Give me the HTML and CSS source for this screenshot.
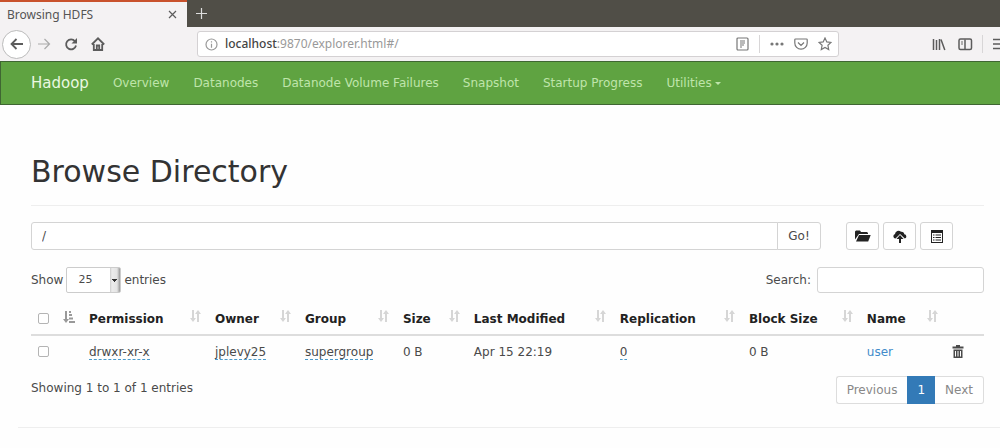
FILE: index.html
```
<!DOCTYPE html>
<html lang="en">
<head>
<meta charset="utf-8">
<title>Browsing HDFS</title>
<link rel="stylesheet" href="styles.css">
</head>
<body>
<svg class="defs" aria-hidden="true">
  <symbol id="sort" viewBox="0 0 12 12"><path d="M3 0h2v8h2L4 12 1 8h2zM8 12h2V4h2L9 0 6 4h2z"/></symbol>
</svg>
<header class="browser">
  <div class="tabs">
    <div class="tab"><span>Browsing HDFS</span>
      <button class="plain" aria-label="Close tab"><svg width="9" height="9" viewBox="0 0 9 9" class="line"><path d="M1 1l7 7M8 1L1 8"/></svg></button>
    </div>
    <button class="plain new-tab" aria-label="New tab"><svg width="13" height="13" viewBox="0 0 13 13" class="line"><path d="M6.5 1v11M1 6.5h11"/></svg></button>
  </div>
  <div class="toolbar">
    <div class="nav-buttons">
      <button class="plain back" aria-label="Back"><svg width="14" height="12" viewBox="0 0 14 12" class="line thick"><path d="M13 6H1.500M6.500 1l-5 5 5 5"/></svg></button>
      <button class="plain forward" aria-label="Forward"><svg width="14" height="12" viewBox="0 0 14 12" class="line"><path d="M1 6h11.500M7.500 1l5 5-5 5"/></svg></button>
      <button class="plain" aria-label="Reload"><svg width="14" height="14" viewBox="0 0 14 14" class="line thick"><path d="M11 4.200A5 5 0 1 0 12 8.500"/><path class="solid" d="M13 1v5.500H7.500z"/></svg></button>
      <button class="plain" aria-label="Home"><svg width="14" height="14" viewBox="0 0 14 14" class="line thick"><path d="M.8 7.500L7 1.300l6.200 6.200M2.800 7v6h8.400V7"/><path d="M5.800 13V8.500h2.400V13z"/></svg></button>
    </div>
    <div class="address">
      <svg width="13" height="13" viewBox="0 0 13 13" class="line light"><circle cx="6.500" cy="6.500" r="5.500"/><path d="M6.500 5.700v4M6.500 3.200v1.300"/></svg>
      <span class="url"><b>localhost</b>:9870/explorer.html#/</span>
      <div class="address-tools">
        <svg width="13" height="14" viewBox="0 0 13 14" class="line"><rect x="1" y="1" width="11" height="12" rx="1"/><path d="M4 4h5M4 6h5M4 8h4M4 10h2"/></svg>
        <i class="divider"></i>
        <svg width="14" height="14" viewBox="0 0 14 14"><circle cx="2" cy="7" r="1.600"/><circle cx="7" cy="7" r="1.600"/><circle cx="12" cy="7" r="1.600"/></svg>
        <svg width="14" height="14" viewBox="0 0 14 14" class="line"><path d="M1.500 2h11q.7 0 .7.700V6a6.200 6.200 0 0 1-12.400 0V2.700q0-.7.700-.7zM4 5.500l3 3 3-3"/></svg>
        <svg width="14" height="14" viewBox="0 0 14 14" class="line"><path d="M7 1l1.800 3.900 4.200.5-3.100 2.900.8 4.200L7 10.400l-3.700 2.100.8-4.200L1 5.400l4.200-.5z"/></svg>
      </div>
    </div>
    <div class="toolbar-end">
      <button class="plain" aria-label="Library"><svg width="14" height="13" viewBox="0 0 14 13" class="line medium"><path d="M1.500 1v11M4.500 2v10M7.500 1v11M9 1.500L12.800 12"/></svg></button>
      <button class="plain" aria-label="Sidebars"><svg width="15" height="13" viewBox="0 0 15 13" class="line medium"><rect x="1" y="1" width="12.500" height="10.500" rx="1.500"/><path d="M7 1.500v10"/><path class="light" d="M3 4h2M3 6h2"/></svg></button>
      <i class="divider"></i>
      <button class="plain" aria-label="Menu"><svg width="14" height="12" viewBox="0 0 14 12" class="line medium"><path d="M1 1.500h12M1 6h12M1 10.500h12"/></svg></button>
    </div>
  </div>
</header>

<nav class="navbar">
  <a class="brand" href="#">Hadoop</a>
  <a href="#">Overview</a>
  <a href="#">Datanodes</a>
  <a href="#">Datanode Volume Failures</a>
  <a href="#">Snapshot</a>
  <a href="#">Startup Progress</a>
  <a href="#">Utilities <i class="caret"></i></a>
</nav>

<main class="page">
  <h1>Browse Directory</h1>
  <div class="path-row">
    <form class="path">
      <input type="text" value="/" aria-label="Directory path">
      <button type="button">Go!</button>
    </form>
    <div class="actions">
      <button aria-label="Create directory"><svg width="16" height="12" viewBox="0 0 16 12"><path d="M0 9.500V1.500L1 .500h4l1 1.500h6l1 1v1H4z"/><path d="M4 5h11.700l-2.500 6.500H1z"/></svg></button>
      <button aria-label="Upload files"><svg width="14" height="13" viewBox="0 0 14 13"><path d="M2.500 8.500A2.300 2.300 0 0 1 2 4 3.500 3.500 0 0 1 8 1.800a2.500 2.500 0 0 1 3.300 2.400 2.200 2.200 0 0 1 .5 4.300L7 4z"/><path d="M7 5l3.500 4H8v4H6V9H3.500z"/></svg></button>
      <button aria-label="Cut and paste"><svg width="12" height="13" viewBox="0 0 12 13"><path d="M0 0h12v13H0zM1 3v9h10V3z" fill-rule="evenodd"/><path d="M2 4.500h1.500v1H2zM2 7h1.500v1H2zM2 9.500h1.500v1H2zM4.500 4.500H10v1H4.500zM4.500 7H10v1H4.500zM4.500 9.500H10v1H4.500z"/></svg></button>
    </div>
  </div>

  <div class="controls">
    <label>Show <select><option>25</option></select> entries</label>
    <label class="search">Search: <input type="search"></label>
  </div>

  <table>
    <colgroup><col class="c-check"><col class="c-perm"><col class="c-owner"><col class="c-group"><col class="c-size"><col class="c-date"><col class="c-repl"><col class="c-block"><col class="c-name"><col class="c-trash"></colgroup>
    <thead>
      <tr>
        <th><div class="head"><input type="checkbox" aria-label="Select all"><svg class="sorted" width="12" height="12" viewBox="0 0 12 12"><path d="M2 0h2v8h2L3 12 0 8h2zM6 0h2v2H6zM6 3h3v2H6zM6 6.500h4v2H6zM6 10h6v2H6z"/></svg></div></th>
        <th><div class="head">Permission<svg class="sort"><use href="#sort"/></svg></div></th>
        <th><div class="head">Owner<svg class="sort"><use href="#sort"/></svg></div></th>
        <th><div class="head">Group<svg class="sort"><use href="#sort"/></svg></div></th>
        <th><div class="head">Size<svg class="sort"><use href="#sort"/></svg></div></th>
        <th><div class="head">Last Modified<svg class="sort"><use href="#sort"/></svg></div></th>
        <th><div class="head">Replication<svg class="sort"><use href="#sort"/></svg></div></th>
        <th><div class="head">Block Size<svg class="sort"><use href="#sort"/></svg></div></th>
        <th><div class="head">Name<svg class="sort"><use href="#sort"/></svg></div></th>
        <th></th>
      </tr>
    </thead>
    <tbody>
      <tr>
        <td><input type="checkbox" aria-label="Select user"></td>
        <td><span class="editable">drwxr-xr-x</span></td>
        <td><span class="editable">jplevy25</span></td>
        <td><span class="editable">supergroup</span></td>
        <td>0 B</td>
        <td>Apr 15 22:19</td>
        <td><span class="editable">0</span></td>
        <td>0 B</td>
        <td><a href="#">user</a></td>
        <td><button class="plain" aria-label="Delete"><svg width="12" height="14" viewBox="0 0 12 14"><path d="M4 0h4v1.500h3.500v2H.5v-2H4V1h4v.5H4z"/><path d="M1.500 4.500h9V13h-9zM3 6v5.500h1V6zM5.500 6v5.500h1V6zM8 6v5.500h1V6z" fill-rule="evenodd"/></svg></button></td>
      </tr>
    </tbody>
  </table>

  <div class="summary">
    <span>Showing 1 to 1 of 1 entries</span>
    <div class="pager"><button>Previous</button><button class="current">1</button><button>Next</button></div>
  </div>
</main>
<hr class="end">
</body>
</html>
```
FILE: styles.css
```
* { box-sizing: border-box; }
body {
  margin: 0;
  background: #fefefe;
  color: #4a4a4a;
  font: 12px/16px "DejaVu Sans", sans-serif;
  overflow: hidden;
}
button, input, select { font: inherit; color: inherit; margin: 0; }
button { cursor: pointer; }
a { text-decoration: none; }
svg { display: block; flex: none; fill: currentColor; }
.defs { position: absolute; width: 0; height: 0; }
.line { fill: none; stroke: currentColor; stroke-width: 1.2; }
.medium { stroke-width: 1.5; }
.thick { stroke-width: 1.8; }
.line .solid { fill: currentColor; stroke: none; }
.plain { display: flex; align-items: center; justify-content: center; border: 0; padding: 0; background: none; }

.browser { font-family: "Noto Sans", sans-serif; color: #555; background: #f4f2f3; }
.browser button { color: #5c5c5c; }
.tabs { display: flex; height: 27px; background: #504e47; }
.tab {
  display: flex;
  align-items: center;
  justify-content: space-between;
  width: 187px;
  padding: 0 10px 0 7px;
  border-top: 2px solid #c9522d;
  background: #f4f2f3;
}
.browser .new-tab { margin-left: 8px; color: #ddd; }
.toolbar { display: flex; align-items: center; height: 34px; }
.nav-buttons { display: flex; align-items: center; gap: 13px; width: 197px; padding-left: 2px; }
.back { width: 29px; height: 29px; border: 1px solid #bbb; border-radius: 50%; background: #fff; }
.browser .forward { color: #aaa; margin-left: -7px; }
.address {
  display: flex;
  flex: 1;
  align-items: center;
  height: 26px;
  padding: 0 5px 0 7px;
  border: 1px solid #d4d1d3;
  border-radius: 3px;
  background: #fff;
}
.light { color: #999; stroke: #999; }
.url { margin-left: 7px; color: #999; }
.url b { font-weight: 500; color: #444; }
.address-tools { display: flex; align-items: center; gap: 10px; margin-left: auto; padding-right: 1px; color: #777; }
.divider { width: 1px; height: 18px; background: #d8d6d7; }
.toolbar-end { display: flex; align-items: center; gap: 12px; width: 161px; padding-left: 93px; overflow: hidden; }
.toolbar-end .divider { flex: none; margin: 0 -3px; }

.navbar {
  display: flex;
  align-items: center;
  gap: 24px;
  height: 44px;
  padding-left: 30px;
  border: 1px solid #3f6632;
  border-width: 1px 0 1px 1px;
  background: #5fa341;
}
.navbar a { color: #bfe5ab; }
.navbar .brand { color: #eaf8e2; font-size: 15px; }
.caret { display: inline-block; border: 3px solid transparent; border-top-color: currentColor; border-bottom: 0; vertical-align: middle; }

.page { padding: 47px 16px 0 31px; }
h1 { margin: 0; padding-bottom: 13px; border-bottom: 1px solid #eee; color: #333; font-size: 30px; line-height: 40px; font-weight: 400; }
.path-row { display: flex; gap: 25px; margin-top: 16px; }
.path { display: flex; flex: 1; }
.path input, .path button, .actions button, .controls input {
  height: 28px;
  border: 1px solid #d4d4d4;
  border-radius: 3px;
  background: #fff;
}
.path input { flex: 1; min-width: 0; padding: 0 10px; border-radius: 3px 0 0 3px; }
.path button { width: 44px; margin-left: -1px; padding: 0; border-radius: 0 3px 3px 0; }
.actions { display: flex; gap: 4px; margin-right: 31px; color: #222; }
.actions button { display: flex; align-items: center; justify-content: center; width: 33px; padding: 0; }
.controls { display: flex; justify-content: space-between; margin-top: 17px; }
.controls label { display: flex; align-items: center; gap: 3px; }
.controls .search { gap: 6px; }
.controls input { width: 167px; height: 26px; }
.controls select {
  appearance: none;
  width: 55px;
  height: 26px;
  padding: 0 0 0 11px;
  border: 1px solid #ccc;
  border-radius: 2px;
  font-size: 11px;
  background:
    linear-gradient(#333, #333) right 3px top 11px / 5px 1px no-repeat,
    linear-gradient(#333, #333) right 4px top 12px / 3px 1px no-repeat,
    linear-gradient(#333, #333) right 5px top 13px / 1px 1px no-repeat,
    linear-gradient(90deg, #ccc, #ececec 2px, #e4e4e4 7px, #999) right / 10px 100% no-repeat,
    #fff;
}

table { width: 100%; margin-top: 10px; border-collapse: collapse; table-layout: fixed; }
th, td { padding: 0 7px; text-align: left; white-space: nowrap; }
th { height: 32px; border-bottom: 2px solid #ddd; color: #222; }
td { height: 32px; }
.c-check { width: 5.35%; }
.c-perm { width: 13.22%; }
.c-owner { width: 9.44%; }
.c-group { width: 10.28%; }
.c-size { width: 7.45%; }
.c-date { width: 15.32%; }
.c-repl { width: 13.54%; }
.c-block { width: 12.38%; }
.c-name { width: 8.92%; }
.c-trash { width: 4.1%; }
.head { display: flex; align-items: center; justify-content: space-between; }
.sort { width: 12px; height: 12px; margin-bottom: 5px; color: #d6d6d6; }
.sorted { margin-bottom: 3px; color: #999; }
table input {
  appearance: none;
  display: block;
  width: 11px;
  height: 11px;
  border: 1px solid #b4b4b4;
  border-radius: 2px;
  background: #fff;
}
table a { color: #428bca; }
.editable { border-bottom: 1px dashed #4a9bcb; }
.summary { display: flex; align-items: flex-start; justify-content: space-between; margin-top: 9px; }
.summary span { padding-top: 4px; }
.pager { display: flex; }
.pager button { height: 28px; padding: 0 10px; border: 1px solid #ddd; background: #fff; color: #888; }
.pager button:first-child { border-radius: 3px 0 0 3px; border-right: 0; }
.pager button:last-child { border-radius: 0 3px 3px 0; border-left: 0; }
.pager .current { padding: 0 9px; border-color: #337ab7; background: #337ab7; color: #fff; }
.end { margin: 23px 0 0 18px; border: 0; border-top: 1px solid #eee; }
```
